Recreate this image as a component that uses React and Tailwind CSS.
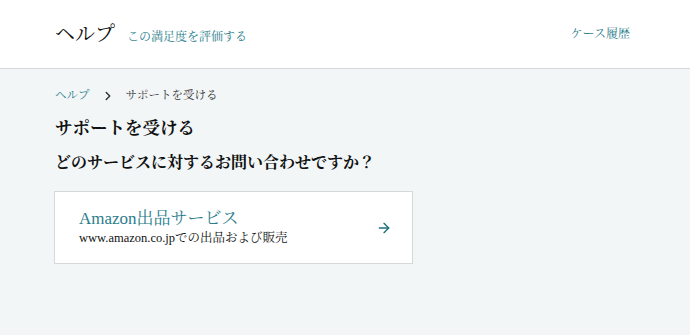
import { ArrowRight, ChevronRight } from "lucide-react";

const serif = { fontFamily: '"Liberation Serif", "Noto Serif CJK JP", "Noto Sans CJK JP", serif' };

export default function App() {
  return (
    <div className="w-[690px] h-[335px] bg-[#f3f6f7] text-[#0f1111]" style={serif}>
      <header className="h-[69px] bg-white border-b border-[#d5d9d9] flex items-center justify-between pl-[55px] pr-[60px]">
        <div className="flex items-baseline gap-[12px]">
          <span className="text-[20px] text-[#0f1111]">ヘルプ</span>
          <span className="text-[12px] text-[#2a7d8c]">この満足度を評価する</span>
        </div>
        <span className="text-[12px] text-[#2a7d8c]">ケース履歴</span>
      </header>

      <main className="px-[55px]">
        <nav className="flex items-center h-[16px] mt-[19px] text-[11.5px]">
          <span className="text-[#2a7d8c]">ヘルプ</span>
          <ChevronRight className="w-[14px] h-[14px] mx-[11px] text-[#333]" strokeWidth={2.5} />
          <span className="text-[#333]">サポートを受ける</span>
        </nav>
        <h1 className="text-[17.5px] font-bold mt-[12px] leading-[24px]">サポートを受ける</h1>
        <h2 className="text-[16px] font-bold mt-[11px] leading-[24px]">どのサービスに対するお問い合わせですか？</h2>

        <div className="mt-[16px] -ml-px w-[359px] h-[73px] bg-white border border-[#d5d9d9] flex items-center justify-between pl-[24px] pr-[20px]">
          <div className="flex flex-col">
            <span className="text-[17px] leading-[20px] text-[#2a7d8c]">Amazon出品サービス</span>
            <span className="text-[12.5px] leading-[18px] text-[#0f1111]">www.amazon.co.jpでの出品および販売</span>
          </div>
          <ArrowRight className="w-[16px] h-[16px] text-[#1f6f7d]" strokeWidth={2} />
        </div>
      </main>
    </div>
  );
}
